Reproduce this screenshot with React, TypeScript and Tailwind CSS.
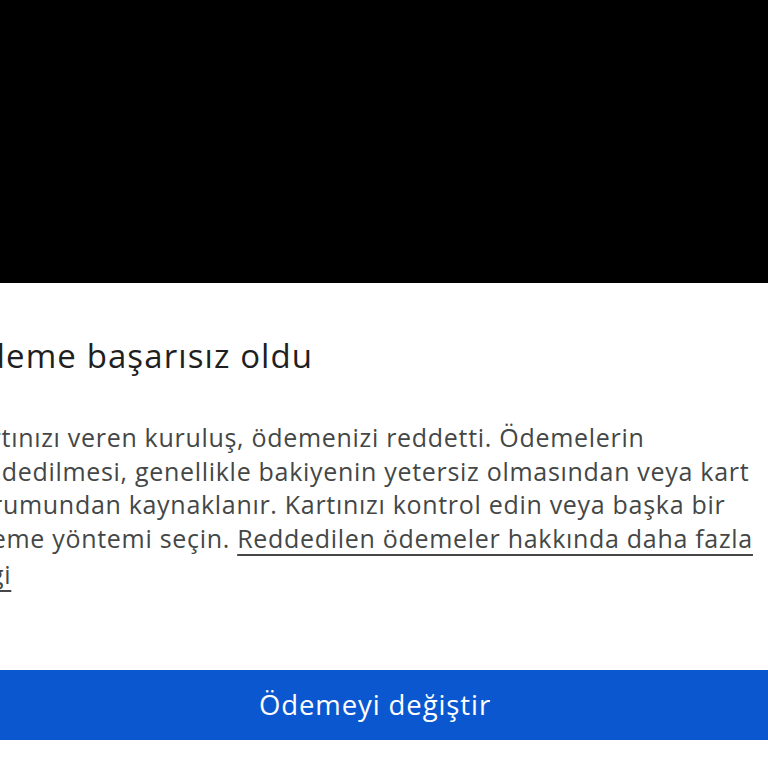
import React from 'react';

const lines = [
  'Kartınızı veren kuruluş, ödemenizi reddetti. Ödemelerin',
  'reddedilmesi, genellikle bakiyenin yetersiz olmasından veya kart',
  'durumundan kaynaklanır. Kartınızı kontrol edin veya başka bir',
];

const App: React.FC = () => {
  return (
    <div className="w-[768px] h-[768px] overflow-hidden bg-white flex flex-col font-['Open_Sans',sans-serif]">
      {/* Video / overlay area */}
      <div className="h-[283px] bg-black shrink-0" />

      {/* Sheet */}
      <div className="flex flex-col ml-[-40px] w-[830px] shrink-0">
        <h1 className="mt-[51px] ml-[-2px] text-[33px] leading-[44px] text-[#1f1f1f] whitespace-nowrap tracking-[1.1px]">
          Ödeme başarısız oldu
        </h1>

        <div className="mt-[43px] text-[25px] leading-[33.5px] text-[#444746] whitespace-nowrap tracking-[0.7px]">
          {lines.map((l) => (
            <div key={l}>{l}</div>
          ))}
          <div>
            ödeme yöntemi seçin.{' '}
            <span className="underline underline-offset-[6px] decoration-[2px]">
              Reddedilen ödemeler hakkında daha fazla
            </span>
          </div>
          <div className="mt-[3px]">
            <span className="underline underline-offset-[6px] decoration-[2px]">bilgi</span>
          </div>
        </div>

        <button className="mt-[78px] h-[70px] w-full bg-[#0b57d0] text-white text-[27.5px] tracking-[0.9px]">
          Ödemeyi değiştir
        </button>
      </div>
    </div>
  );
};

export default App;
